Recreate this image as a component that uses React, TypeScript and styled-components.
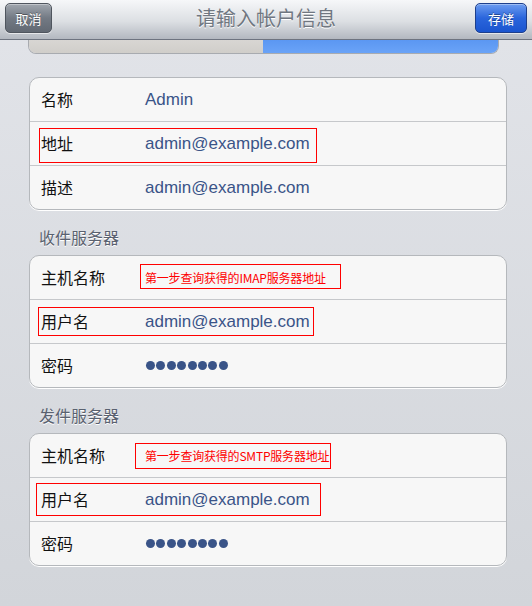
import React from 'react'
import styled, { createGlobalStyle } from 'styled-components'

const GlobalStyle = createGlobalStyle`
  html, body {
    margin: 0;
    padding: 0;
  }
  body {
    width: 532px;
    height: 606px;
    overflow: hidden;
    background: linear-gradient(#e2e4e9, #d2d5da);
    font-family: 'Liberation Sans', 'Noto Sans CJK SC', sans-serif;
  }
`

const Page = styled.div`
  display: flex;
  flex-direction: column;
  width: 532px;
  height: 606px;
`

const NavBar = styled.div`
  height: 40px;
  box-sizing: border-box;
  display: flex;
  align-items: center;
  justify-content: space-between;
  padding: 0 5px;
  background: linear-gradient(#f6f7f9, #dcdfe3 55%, #b3b8c0);
  border-bottom: 1px solid #6e7480;
  position: relative;
`

const NavTitle = styled.div`
  position: absolute;
  left: 0;
  right: 0;
  top: 6px;
  text-align: center;
  font-family: 'Noto Sans CJK SC', sans-serif;
  font-size: 20px;
  line-height: 24px;
  color: #707781;
  text-shadow: 0 1px 0 #ffffff;
  pointer-events: none;
`

const NavButton = styled.button<{ primary?: boolean }>`
  position: relative;
  z-index: 1;
  height: 30px;
  margin-top: -3px;
  padding: 0;
  width: ${({ primary }) => (primary ? '52px' : '47px')};
  border-radius: 5px;
  border: 1px solid ${({ primary }) => (primary ? '#1d3f8c' : '#4f555e')};
  background: ${({ primary }) =>
    primary ? 'linear-gradient(#6c9cf0, #2a65dc 50%, #1b55cf)' : 'linear-gradient(#a0a6ae, #737a84 50%, #626973)'};
  box-shadow: inset 0 1px 0 rgba(255, 255, 255, 0.35), 0 1px 0 rgba(255, 255, 255, 0.6);
  color: #ffffff;
  font-family: 'Noto Sans CJK SC', sans-serif;
  font-size: 13px;
  text-shadow: 0 -1px 0 rgba(0, 0, 0, 0.35);
`

const Strip = styled.div`
  display: flex;
  height: 13px;
  margin: 0 33px 0 28px;
  border-radius: 0 0 8px 8px;
  overflow: hidden;
  border: 1px solid #a8abb0;
  border-top: none;
`

const StripPart = styled.div<{ active?: boolean }>`
  flex: ${({ active }) => (active ? '236' : '235')};
  background: ${({ active }) => (active ? 'linear-gradient(#5b97f2, #6aa3f7)' : 'linear-gradient(#d8d6d3, #d0ceca)')};
`

const Content = styled.div`
  display: flex;
  flex-direction: column;
  padding: 23px 25px 0 29px;
`

const SectionTitle = styled.div`
  height: 45px;
  box-sizing: border-box;
  padding: 17px 0 0 10px;
  font-family: 'Noto Sans CJK SC', sans-serif;
  font-size: 16px;
  line-height: 20px;
  color: #59616f;
  text-shadow: 0 1px 0 #ffffff;
`

const Card = styled.div`
  background: #f7f7f7;
  border: 1px solid #b5b8bc;
  border-radius: 10px;
  box-shadow: 0 1px 0 #ffffff;
  overflow: hidden;
`

const Row = styled.div`
  position: relative;
  display: grid;
  grid-template-columns: 104px 1fr;
  align-items: center;
  height: 43px;
  padding-left: 11px;
  & + & {
    border-top: 1px solid #c6c8cb;
  }
`

const Label = styled.div`
  font-family: 'Noto Sans CJK SC', sans-serif;
  font-size: 16px;
  line-height: 20px;
  padding-bottom: 2px;
  color: #111111;
`

const Value = styled.div`
  font-family: 'Liberation Sans', 'Noto Sans CJK SC', sans-serif;
  font-size: 17px;
  color: #3a5488;
`

const Note = styled.div`
  font-family: 'Noto Sans CJK SC', serif;
  font-size: 12px;
  color: #ff0000;
  letter-spacing: -0.2px;
`

const Mark = styled.div<{ left: number; top: number; w: number; h: number }>`
  position: absolute;
  left: ${({ left }) => left}px;
  top: ${({ top }) => top}px;
  width: ${({ w }) => w}px;
  height: ${({ h }) => h}px;
  border: 1px solid #ff0000;
  box-sizing: border-box;
  pointer-events: none;
`

const Dots = styled.div`
  display: flex;
  gap: 1.4px;
  padding-left: 1px;
`

const Dot = styled.span`
  width: 9px;
  height: 9px;
  border-radius: 50%;
  background: #3a5488;
`

type Box = { left: number; top: number; w: number; h: number }

function Password() {
  return (
    <Dots>
      {Array.from({ length: 8 }).map((_, i) => (
        <Dot key={i} />
      ))}
    </Dots>
  )
}

function Field({ label, children, mark }: { label: string; children: React.ReactNode; mark?: Box }) {
  return (
    <Row>
      <Label>{label}</Label>
      {children}
      {mark && <Mark {...mark} />}
    </Row>
  )
}

export default function App() {
  return (
    <Page>
      <GlobalStyle />
      <NavBar>
        <NavButton>取消</NavButton>
        <NavTitle>请输入帐户信息</NavTitle>
        <NavButton primary>存储</NavButton>
      </NavBar>
      <Strip>
        <StripPart />
        <StripPart active />
      </Strip>
      <Content>
        <Card>
          <Field label="名称">
            <Value>Admin</Value>
          </Field>
          <Field label="地址" mark={{ left: 9, top: 6, w: 278, h: 35 }}>
            <Value>admin@example.com</Value>
          </Field>
          <Field label="描述">
            <Value>admin@example.com</Value>
          </Field>
        </Card>

        <SectionTitle>收件服务器</SectionTitle>
        <Card>
          <Field label="主机名称" mark={{ left: 110, top: 8, w: 201, h: 25 }}>
            <Note>第一步查询获得的IMAP服务器地址</Note>
          </Field>
          <Field label="用户名" mark={{ left: 8, top: 7, w: 276, h: 29 }}>
            <Value>admin@example.com</Value>
          </Field>
          <Field label="密码">
            <Password />
          </Field>
        </Card>

        <SectionTitle>发件服务器</SectionTitle>
        <Card>
          <Field label="主机名称" mark={{ left: 105, top: 9, w: 196, h: 26 }}>
            <Note>第一步查询获得的SMTP服务器地址</Note>
          </Field>
          <Field label="用户名" mark={{ left: 6, top: 5, w: 285, h: 33 }}>
            <Value>admin@example.com</Value>
          </Field>
          <Field label="密码">
            <Password />
          </Field>
        </Card>
      </Content>
    </Page>
  )
}
